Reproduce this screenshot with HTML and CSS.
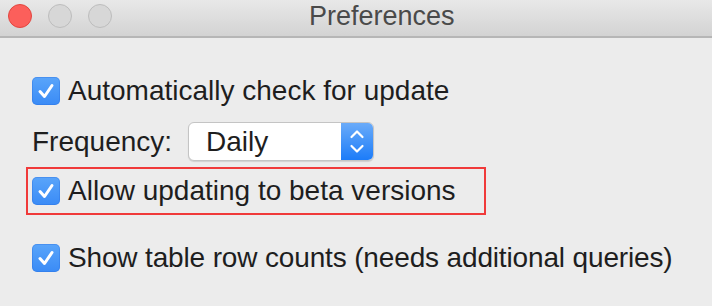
FILE: index.html
```html
<!DOCTYPE html>
<html>
<head>
<meta charset="utf-8">
<link rel="stylesheet" href="styles.css">
</head>
<body>
<div class="window">
  <div class="titlebar">
    <div class="lights">
      <span class="light close"></span>
      <span class="light"></span>
      <span class="light"></span>
    </div>
    <div class="title">Preferences</div>
  </div>
  <div class="content">
    <label class="row check-row first">
      <span class="checkbox"><svg viewBox="0 0 28 28" width="28" height="28"><path d="M8 14.5 L12.5 19.5 L20 8.5" fill="none" stroke="#fff" stroke-width="3" stroke-linecap="round" stroke-linejoin="round"/></svg></span>
      <span class="label">Automatically check for update</span>
    </label>
    <div class="row freq-row">
      <span class="freq-label">Frequency:</span>
      <div class="popup">
        <span class="popup-value">Daily</span>
        <span class="stepper"><svg viewBox="0 0 32 37" width="32" height="37"><path d="M10.5 14 L16 8.5 L21.5 14" fill="none" stroke="#fff" stroke-width="2.2" stroke-linecap="round" stroke-linejoin="round"/><path d="M10.5 23 L16 28.5 L21.5 23" fill="none" stroke="#fff" stroke-width="2.2" stroke-linecap="round" stroke-linejoin="round"/></svg></span>
      </div>
    </div>
    <label class="row check-row highlight">
      <span class="checkbox"><svg viewBox="0 0 28 28" width="28" height="28"><path d="M8 14.5 L12.5 19.5 L20 8.5" fill="none" stroke="#fff" stroke-width="3" stroke-linecap="round" stroke-linejoin="round"/></svg></span>
      <span class="label">Allow updating to beta versions</span>
    </label>
    <label class="row check-row last">
      <span class="checkbox"><svg viewBox="0 0 28 28" width="28" height="28"><path d="M8 14.5 L12.5 19.5 L20 8.5" fill="none" stroke="#fff" stroke-width="3" stroke-linecap="round" stroke-linejoin="round"/></svg></span>
      <span class="label tight">Show table row counts (needs additional queries)</span>
    </label>
  </div>
</div>
</body>
</html>
```

FILE: styles.css
```css
html, body {
  margin: 0;
  padding: 0;
}
body {
  background: #ececec;
  font-family: "Liberation Sans", Arial, sans-serif;
  color: #1e1e1e;
  width: 712px;
  height: 306px;
  overflow: hidden;
}
.titlebar {
  height: 36px;
  border-bottom: 2px solid #b6b6b6;
  background: linear-gradient(#e8e8e8, #d3d3d3);
  display: flex;
  align-items: center;
}
.lights {
  display: flex;
  gap: 16px;
  margin-left: 8px;
  margin-top: -4px;
}
.light {
  width: 22px;
  height: 22px;
  border-radius: 50%;
  border: 1px solid #bdbdbd;
  background: #d7d7d7;
  display: block;
}
.light.close {
  background: #fc5f5b;
  border-color: #e2463f;
}
.title {
  margin-left: 197px;
  font-size: 27px;
  color: #4a4a4a;
  margin-top: -4px;
}
.content {
  padding-left: 32px;
}
.row {
  display: flex;
  align-items: center;
}
.check-row {
  height: 28px;
}
.first {
  margin-top: 39px;
}
.checkbox {
  width: 28px;
  height: 28px;
  border-radius: 5px;
  background: linear-gradient(#5aa5fa, #3a8bf6);
  box-shadow: inset 0 0 0 1px rgba(40, 110, 220, 0.35);
  flex: none;
  display: block;
}
.checkbox svg {
  display: block;
}
.label {
  font-size: 28px;
  margin-left: 8px;
  white-space: nowrap;
}
.label.tight {
  letter-spacing: -0.15px;
}
.freq-row {
  margin-top: 17px;
  height: 39px;
}
.freq-label {
  font-size: 28px;
  width: 156px;
  flex: none;
}
.popup {
  width: 184px;
  height: 37px;
  border: 1px solid #c4c4c4;
  border-radius: 6px;
  background: #fff;
  box-shadow: 0 1px 1px rgba(0, 0, 0, 0.12);
  display: flex;
  align-items: center;
  overflow: hidden;
}
.popup-value {
  font-size: 28px;
  padding-left: 17px;
  flex: 1;
}
.stepper {
  width: 32px;
  height: 37px;
  background: linear-gradient(#6aabf9, #1c7cf9);
  flex: none;
}
.stepper svg {
  display: block;
}
.highlight {
  margin-top: 6px;
  margin-left: -6px;
  width: 452px;
  height: 44px;
  border: 2px solid #f03a3a;
  padding-left: 4px;
}
.last {
  margin-top: 29px;
}
```
